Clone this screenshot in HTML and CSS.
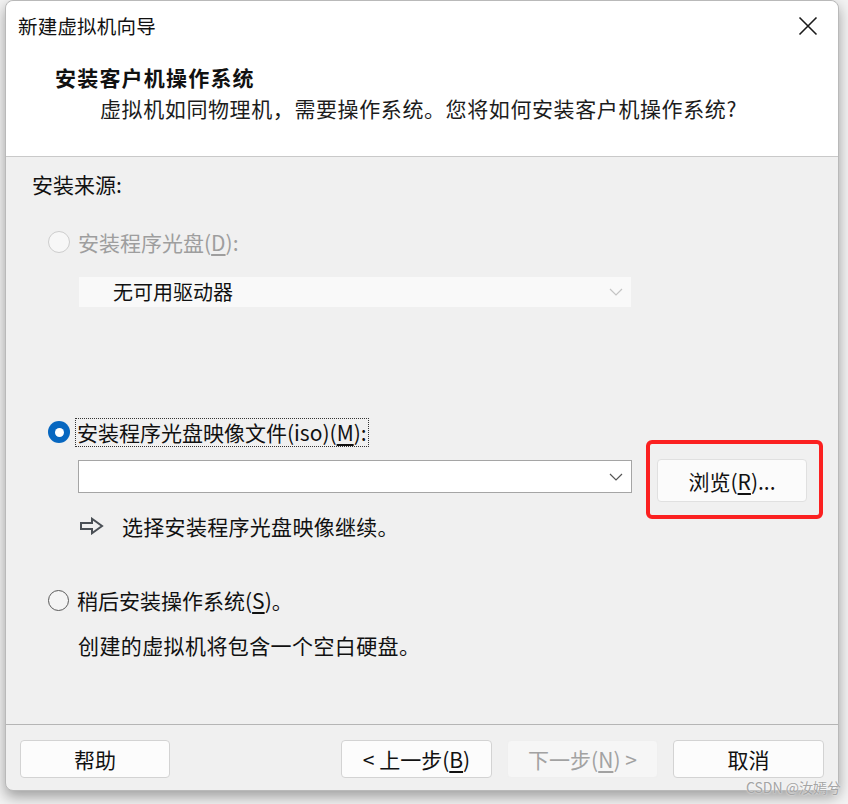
FILE: index.html
```html
<!DOCTYPE html>
<html lang="zh-CN">
<head>
<meta charset="utf-8">
<title>新建虚拟机向导</title>
<link rel="stylesheet" href="styles.css">
</head>
<body>
<div class="window">
  <div class="titlebar">
    <span class="title">新建虚拟机向导</span>
    <svg class="close" width="20" height="20" viewBox="0 0 20 20"><path d="M1.5 1.5 L18.5 18.5 M18.5 1.5 L1.5 18.5" stroke="#1a1a1a" stroke-width="1.6" fill="none"/></svg>
  </div>
  <div class="header">
    <div class="h-title">安装客户机操作系统</div>
    <div class="h-sub">虚拟机如同物理机，需要操作系统。您将如何安装客户机操作系统?</div>
  </div>
  <div class="content">
    <div class="section-label">安装来源:</div>

    <div class="option disabled">
      <span class="radio"></span>
      <span class="label">安装程序光盘(<u>D</u>):</span>
    </div>
    <div class="combo combo-disabled">
      <span class="combo-text">无可用驱动器</span>
      <svg class="chev" width="14" height="8" viewBox="0 0 14 8"><path d="M1 1 L7 7 L13 1" stroke="#c4c4c4" stroke-width="1.2" fill="none"/></svg>
    </div>

    <div class="option option-iso">
      <span class="radio radio-checked"></span>
      <span class="label focus">安装程序光盘映像文件(iso)(<u>M</u>):</span>
    </div>
    <div class="iso-row">
      <div class="combo combo-edit">
        <svg class="chev" width="14" height="8" viewBox="0 0 14 8"><path d="M1 1 L7 7 L13 1" stroke="#555" stroke-width="1.2" fill="none"/></svg>
      </div>
      <button class="btn browse">浏览(<u>R</u>)...</button>
      <div class="annot"></div>
    </div>
    <div class="hint">
      <svg class="arrow" width="26" height="18" viewBox="0 0 26 18"><path d="M2 6 H13 V1.8 L23 9 L13 16.2 V12 H2 Z" stroke="#4a4f55" stroke-width="2" fill="none" stroke-linejoin="miter"/></svg>
      <span>选择安装程序光盘映像继续。</span>
    </div>

    <div class="option option-later">
      <span class="radio radio-empty"></span>
      <span class="label">稍后安装操作系统(<u>S</u>)。</span>
    </div>
    <div class="note">创建的虚拟机将包含一个空白硬盘。</div>
  </div>
  <div class="footer">
    <button class="btn fbtn">帮助</button>
    <div class="spacer"></div>
    <button class="btn fbtn">&lt; 上一步(<u>B</u>)</button>
    <button class="btn fbtn btn-disabled">下一步(<u>N</u>) &gt;</button>
    <button class="btn fbtn">取消</button>
  </div>
  <div class="watermark">CSDN @汝嫣兮</div>
</div>
</body>
</html>
```

FILE: styles.css
```css
* { box-sizing: border-box; }
html, body { margin: 0; padding: 0; }
body {
  width: 848px;
  height: 804px;
  background: #f3f3f3;
  font-family: "Noto Sans CJK SC", "Noto Sans", "Liberation Sans", sans-serif;
  color: #111;
  overflow: hidden;
}
.window {
  position: relative;
  margin-left: 5px;
  width: 834px;
  height: 791px;
  background: #f0f0f0;
  border: 1px solid #b9b9b9;
  border-radius: 8px;
  box-shadow: 0 6px 14px rgba(0,0,0,0.35);
  display: flex;
  flex-direction: column;
}
.titlebar {
  height: 49px;
  background: #fff;
  border-radius: 8px 8px 0 0;
  display: flex;
  align-items: center;
  justify-content: space-between;
  padding: 0 20px 0 12px;
}
.title {
  font-size: 19.5px;
  line-height: 28px;
  letter-spacing: 0.2px;
}
.close { display: block; margin-top: 1px; }
.header {
  height: 107px;
  background: #fff;
  border-bottom: 1px solid #c9c9c9;
  padding-top: 13px;
}
.h-title {
  padding-left: 49px;
  font-size: 21px;
  font-weight: 700;
  line-height: 28px;
  letter-spacing: 1.2px;
}
.h-sub {
  margin-top: 3px;
  padding-left: 94px;
  font-size: 21px;
  line-height: 28px;
  letter-spacing: 0.6px;
  color: #1c1c1c;
}
.content {
  flex: 1;
  padding: 13px 0 0 26px;
  font-size: 21px;
  line-height: 28px;
}
.section-label { height: 28px; }
.option {
  display: flex;
  align-items: center;
  height: 28px;
  margin-left: 16px;
  margin-top: 30px;
}
.option.disabled { color: #9e9e9e; }
.radio {
  width: 22px;
  height: 22px;
  border-radius: 50%;
  flex: none;
}
.disabled .radio {
  border: 1px solid #cdcdcd;
  background: #f7f7f7;
}
.radio-checked {
  background: #0767c0;
  display: flex;
  align-items: center;
  justify-content: center;
}
.radio-checked::after {
  content: "";
  width: 9px;
  height: 9px;
  border-radius: 50%;
  background: #fff;
}
.radio-empty {
  width: 21px;
  height: 21px;
  border: 1.5px solid #5a5a5a;
  background: #f4f4f4;
}
.label { margin-left: 8px; }
.label u { text-underline-offset: 3px; }
.focus {
  margin-left: 6px;
  padding: 0 1px;
  outline: 1px dotted #333;
  line-height: 27px;
}
.combo {
  position: relative;
  width: 554px;
  display: flex;
  align-items: center;
  justify-content: flex-end;
  padding-right: 8px;
}
.combo-disabled {
  margin: 20px 0 0 46px;
  height: 32px;
  background: #f9f9f9;
  border: 1px solid #f0f0f0;
  justify-content: space-between;
  padding-left: 34px;
}
.combo-text { color: #111; font-size: 20px; }
.option-iso { margin-top: 110px; }
.iso-row {
  position: relative;
  display: flex;
  align-items: flex-start;
  margin: 13px 0 0 46px;
  height: 43px;
}
.combo-edit {
  margin-top: 1px;
  height: 33px;
  background: #fff;
  border: 1px solid #a5a5a5;
}
.btn {
  font-family: "Noto Sans CJK SC", "Noto Sans", "Liberation Sans", sans-serif;
  font-size: 21px;
  color: #111;
  background: #fcfcfc;
  border: 1px solid #d3d3d3;
  border-radius: 4px;
  padding: 0;
  line-height: 28px;
}
.btn u { text-underline-offset: 3px; }
.browse {
  margin-left: 25px;
  width: 150px;
  height: 43px;
  background: #fbfbfb;
  border-color: #e0e0e0;
}
.annot {
  position: absolute;
  left: 568px;
  top: -19px;
  width: 177px;
  height: 79px;
  border: 4px solid #fb2020;
  border-radius: 6px;
}
.hint {
  display: flex;
  align-items: center;
  height: 28px;
  margin: 10px 0 0 46px;
}
.arrow { display: block; margin-left: 1px; }
.hint span { margin-left: 17px; letter-spacing: 0.3px; }
.option-later { margin-top: 46px; }
.option-later .label { margin-left: 8px; }
.note {
  margin: 17px 0 0 46px;
  letter-spacing: 0.4px;
}
.footer {
  height: 66px;
  border-top: 1px solid #b5b5b5;
  display: flex;
  align-items: flex-start;
  padding: 15px 14px 0 14px;
  gap: 15px;
}
.spacer { flex: 1; }
.fbtn {
  width: 151px;
  height: 38px;
}
.fbtn:first-child { width: 150px; }
.btn-disabled {
  background: #f6f6f6;
  border-color: #efefef;
  color: #a2a2a2;
}
.watermark {
  position: absolute;
  right: -3px;
  bottom: -5px;
  font-size: 14px;
  line-height: 16px;
  color: #a4a4a4;
  text-shadow: 0 0 2px #fff;
  font-family: "Noto Sans CJK SC", "Liberation Sans", sans-serif;
}
```
